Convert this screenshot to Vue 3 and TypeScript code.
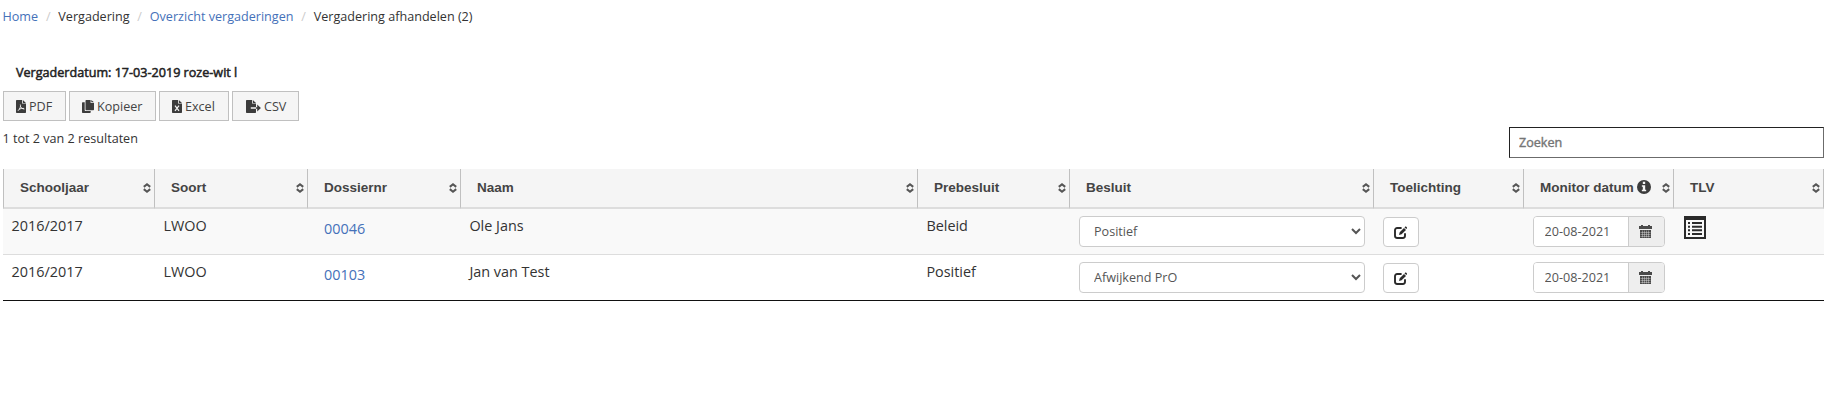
<script setup lang="ts">
import { ref } from 'vue'

interface Column {
  label: string
  width: number
  info?: boolean
}

interface Row {
  year: string
  kind: string
  dossier: string
  name: string
  advice: string
  decision: string
  date: string
  tlv: boolean
}

const columns: Column[] = [
  { label: 'Schooljaar', width: 151 },
  { label: 'Soort', width: 153 },
  { label: 'Dossiernr', width: 153 },
  { label: 'Naam', width: 457 },
  { label: 'Prebesluit', width: 152 },
  { label: 'Besluit', width: 304 },
  { label: 'Toelichting', width: 150 },
  { label: 'Monitor datum', width: 150, info: true },
  { label: 'TLV', width: 151 },
]

const decisions = ['Positief', 'Afwijkend PrO']
const search = ref('')
const rows = ref<Row[]>([
  { year: '2016/2017', kind: 'LWOO', dossier: '00046', name: 'Ole Jans', advice: 'Beleid', decision: 'Positief', date: '20-08-2021', tlv: true },
  { year: '2016/2017', kind: 'LWOO', dossier: '00103', name: 'Jan van Test', advice: 'Positief', decision: 'Afwijkend PrO', date: '20-08-2021', tlv: false },
])
</script>

<template>
  <main class="page">
    <nav class="crumbs">
      <a href="#">Home</a><i>/</i><span>Vergadering</span><i>/</i><a href="#">Overzicht vergaderingen</a><i>/</i><span>Vergadering afhandelen (2)</span>
    </nav>
    <h1 class="title">Vergaderdatum: 17-03-2019 roze-wit l</h1>

    <div class="tools">
      <button class="tool pdf">
        <svg width="10" height="13" viewBox="0 0 10 13"><path fill="#3c3c3c" d="M.7 0H6v3.6h4v8.7a.7.7 0 0 1-.7.7H.7a.7.7 0 0 1-.7-.7V.7A.7.7 0 0 1 .7 0zM6.8 0L10 2.9H6.8z" /><path fill="none" stroke="#f5f5f5" stroke-width=".9" d="M4.3 4.5C5 6 4.300 8.500 2 10.800M4.500 6.500C5.200 8 6.500 9 8.400 9M3.100 9.200C4.500 8.500 6 8.300 8 8.400" /></svg>
        <span>PDF</span>
      </button>
      <button class="tool copy">
        <svg width="12" height="13" viewBox="0 0 12 13"><path fill="#3c3c3c" d="M4.200 0H8.600V3H12v6.500a.7.7 0 0 1-.7.7H4.200a.7.7 0 0 1-.7-.7V.7a.7.7 0 0 1 .7-.7zM9.300 0L12 2.300H9.300zM.7 2.300H2.700V10.300a.8.8 0 0 0 .8.8H8.700v1.200a.7.7 0 0 1-.7.7H.7a.7.7 0 0 1-.7-.7V3a.7.7 0 0 1 .7-.7z" /></svg>
        <span>Kopieer</span>
      </button>
      <button class="tool excel">
        <svg width="10" height="13" viewBox="0 0 10 13"><path fill="#3c3c3c" d="M.7 0H6v3.600h4v8.700a.7.7 0 0 1-.7.7H.7a.7.7 0 0 1-.7-.7V.7A.7.7 0 0 1 .7 0zM6.800 0L10 2.900H6.800z" /><path fill="none" stroke="#f5f5f5" stroke-width="1.200" d="M3 5.700L7 10.800M7 5.700L3 10.800" /></svg>
        <span>Excel</span>
      </button>
      <button class="tool csv">
        <svg width="15" height="13" viewBox="0 0 15 13"><path fill="#3c3c3c" d="M.7 0H6v3.600h4V7.200H4.800v1.600H10v3.500a.7.7 0 0 1-.7.7H.7a.7.7 0 0 1-.7-.7V.7A.7.7 0 0 1 .7 0zM6.800 0L10 2.900H6.800zM10 7.200h1.200V4.500L14.900 8l-3.700 3.500V8.800H10z" /></svg>
        <span>CSV</span>
      </button>
    </div>

    <div class="bar">
      <span class="count">1 tot 2 van 2 resultaten</span>
      <input v-model="search" class="search" type="text" placeholder="Zoeken" />
    </div>

    <table class="grid">
      <colgroup>
        <col v-for="c in columns" :key="c.label" :style="{ width: c.width + 'px' }" />
      </colgroup>
      <thead>
        <tr>
          <th v-for="c in columns" :key="c.label">
            <div class="head">
              <span>{{ c.label }}</span>
              <svg v-if="c.info" class="info" width="14" height="14" viewBox="0 0 13 13"><circle cx="6.500" cy="6.500" r="6.500" fill="#3c3c3c" /><path fill="#f5f5f5" d="M5.400 1.700h2.200v1.900H5.400zM4.500 4.900h3.100v4.200h.9v1.400h-4V9.100h.9V6.300h-.9z" /></svg>
              <svg class="sort" width="8" height="10" viewBox="0 0 8 10"><path fill="none" stroke="#555" stroke-width="2" d="M.8 3.900L4 1.300l3.200 2.600M.8 6.100L4 8.700l3.200-2.600" /></svg>
            </div>
          </th>
        </tr>
      </thead>
      <tbody>
        <tr v-for="r in rows" :key="r.dossier">
          <td class="year">{{ r.year }}</td>
          <td>{{ r.kind }}</td>
          <td class="dossier"><a href="#">{{ r.dossier }}</a></td>
          <td>{{ r.name }}</td>
          <td>{{ r.advice }}</td>
          <td class="control">
            <select v-model="r.decision">
              <option v-for="d in decisions" :key="d">{{ d }}</option>
            </select>
          </td>
          <td class="control">
            <button class="edit" aria-label="Toelichting">
              <svg width="13" height="13" viewBox="0 0 13 13"><path fill="none" stroke="#2b2b2b" stroke-width="1.900" d="M7.600 2H3.200A2.200 2.200 0 0 0 1 4.200v5.600A2.200 2.200 0 0 0 3.200 12h5.600A2.200 2.200 0 0 0 11 9.800V7.300" /><path fill="#2b2b2b" d="M5 9.100l.7-2.800L10 1.900l2 2-4.400 4.400zM10.500 1.400l.8-.8a.5.5 0 0 1 .7 0l1 1a.5.5 0 0 1 0 .7l-.7.8z" /></svg>
            </button>
          </td>
          <td class="control">
            <div class="date">
              <input v-model="r.date" type="text" />
              <span class="addon">
                <svg width="13" height="13" viewBox="0 0 13 13"><path fill="#4a4a4a" d="M2 0h2v1h5V0h2v1h2v3H0V1h2z" /><path fill="#4a4a4a" d="M1 5h11v8H1z" /><path stroke="#eee" stroke-width=".4" d="M1.500 7.500h10M1.500 9.500h10M1.500 11.500h10M3.500 5.500v7M5.500 5.500v7M7.500 5.500v7M9.500 5.500v7" /></svg>
              </span>
            </div>
          </td>
          <td class="control tlv">
            <svg v-if="r.tlv" width="22" height="23" viewBox="0 0 22 23"><path fill="#2b2b2b" fill-rule="evenodd" d="M0 0h22v23H0zM2 4v17h18V4z" /><path fill="#2b2b2b" d="M4 6h2v2H4zM4 9.700h2v2H4zM4 13.300h2v2H4zM4 17h2v2H4zM8 6h10v2H8zM8 9.700h10v2H8zM8 13.300h10v2H8zM8 17h10v2H8z" /></svg>
          </td>
        </tr>
      </tbody>
    </table>
  </main>
</template>

<style>
body {
  margin: 0;
  background: #fff;
}
</style>

<style scoped>
.page {
  box-sizing: border-box;
  width: 1824px;
  height: 419px;
  padding: 6px 0 0 3px;
  font: 12.6px/20px "Open Sans", sans-serif;
  color: #333;
}
a {
  color: #4571b9;
  text-decoration: none;
}
button,
input,
select {
  box-sizing: border-box;
  margin: 0;
  font: inherit;
}
.crumbs {
  height: 20px;
  line-height: 22px;
  margin-left: -0.5px;
  white-space: nowrap;
}
.crumbs i {
  font-style: normal;
  color: #ccc;
  padding: 0 7.8px;
}
.title {
  margin: 36px 0 0 13px;
  height: 20px;
  font-size: 12.6px;
  line-height: 22px;
  font-weight: 400;
  color: #222;
  -webkit-text-stroke: 0.5px #222;
}
.tools {
  display: flex;
  gap: 3px;
  margin-top: 9px;
}
.tool {
  display: flex;
  align-items: center;
  height: 30px;
  padding: 0 0 0 12px;
  border: 1px solid #c0c0c0;
  background: #f5f5f5;
  color: #444;
  gap: 3px;
  white-space: nowrap;
}
.tool span {
  padding-top: 2px;
}
.pdf { width: 63px; }
.copy { width: 87px; }
.excel { width: 70px; }
.csv { width: 67px; padding-left: 13px; }
.bar {
  display: flex;
  justify-content: space-between;
  height: 48px;
}
.count {
  padding-top: 8px;
  margin-left: -0.5px;
}
.search {
  width: 315px;
  height: 31px;
  margin-top: 6px;
  padding: 0 9px 1px;
  border: 1px solid;
  border-color: #222 #6b6b6b #6b6b6b #222;
  background: #fff;
  outline: none;
}
.search::placeholder {
  color: #757575;
  -webkit-text-stroke: 0.4px #757575;
}
.grid {
  width: 1821px;
  table-layout: fixed;
  border-collapse: separate;
  border-spacing: 0;
  border-bottom: 1px solid #111;
}
th {
  height: 38px;
  padding: 0;
  background: #f5f5f5;
  border-left: 1px solid #c0c0c0;
  border-bottom: 2px solid #ddd;
  font: bold 13.5px/20px "Liberation Sans", Arial, sans-serif;
  color: #444;
  text-align: left;
}
th:last-child {
  border-right: 1px solid #c0c0c0;
}
.head {
  display: flex;
  align-items: center;
  padding: 0 3px 0 16px;
}
.info {
  margin: -2px 0 0 3px;
}
.sort {
  margin-left: auto;
}
td {
  box-sizing: border-box;
  height: 45px;
  padding: 7px 0 0 9.4px;
  vertical-align: top;
  font-size: 14.4px;
}
td.year {
  padding-left: 8.6px;
}
tbody tr:first-child td {
  background: #f9f9f9;
}
tbody tr + tr td {
  height: 46px;
  border-top: 1px solid #ddd;
}
td.dossier {
  padding: 10px 0 0 17px;
}
td.control {
  padding: 7px 0 0 10px;
  font-size: 12.6px;
}
td.tlv {
  padding-left: 11px;
}
td svg {
  display: block;
}
select {
  display: block;
  width: 286px;
  height: 31px;
  padding: 0 0 1px 10px;
  border: 1px solid #ccc;
  border-radius: 4px;
  background-color: #fff;
  color: #555;
}
.edit {
  display: flex;
  align-items: center;
  justify-content: center;
  width: 36px;
  height: 30px;
  margin-top: 1px;
  padding: 0 2px 0 0;
  border: 1px solid #ccc;
  border-radius: 4px;
  background: #fff;
}
.date {
  display: flex;
  box-sizing: border-box;
  width: 132px;
  height: 31px;
  border: 1px solid #ccc;
  border-radius: 4px;
  overflow: hidden;
}
.date input {
  width: 95px;
  height: 29px;
  padding: 0 0 1px 10.6px;
  border: 0;
  border-right: 1px solid #ccc;
  background: #fff;
  color: #555;
  outline: none;
}
.addon {
  flex: 1;
  display: flex;
  align-items: center;
  justify-content: center;
  padding-right: 2px;
  background: #eee;
}
</style>
